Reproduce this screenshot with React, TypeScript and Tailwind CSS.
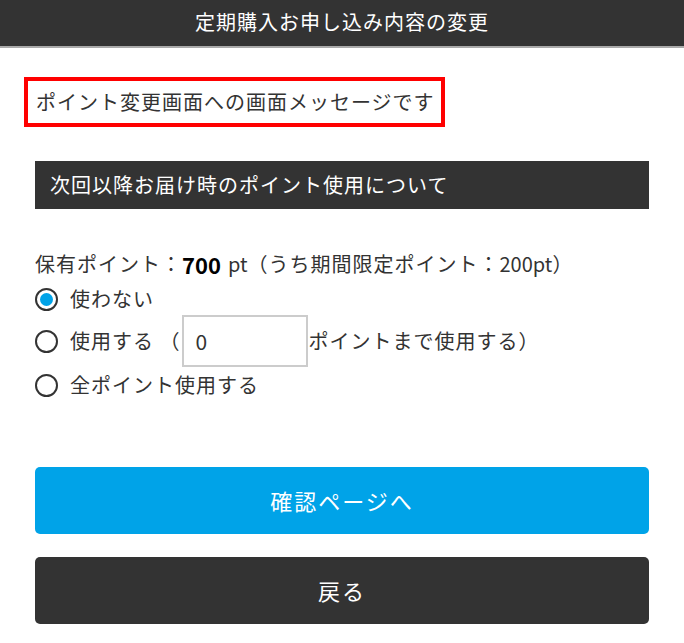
import React, { useState } from "react";

const font = { fontFamily: '"Noto Sans CJK JP", "Noto Sans", sans-serif' };

const Radio = ({ checked, onClick }: { checked: boolean; onClick: () => void }) => (
  <span
    onClick={onClick}
    className="flex h-[23px] w-[23px] shrink-0 items-center justify-center rounded-full border-2 border-[#333] bg-white cursor-pointer"
  >
    {checked && <span className="h-[13px] w-[13px] rounded-full bg-[#00a3e8]" />}
  </span>
);

export default function App() {
  const [mode, setMode] = useState("none");
  const [amount, setAmount] = useState("0");

  return (
    <div className="min-h-screen bg-white text-[#222]" style={font}>
      <div className="flex h-[48px] items-center justify-center border-b-2 border-[#aaa] bg-[#333] pb-[2px] text-[20px] tracking-[1px] text-white">
        定期購入お申し込み内容の変更
      </div>

      <div className="px-[35px] text-[20px] tracking-[1px]">
        <div className="mt-[29px] ml-[-11px] inline-flex h-[50px] items-center border-4 border-[#f00] pl-[8px] pr-[6px] text-[#333]">
          ポイント変更画面への画面メッセージです
        </div>

        <div className="mt-[34px] flex h-[48px] items-center bg-[#333] pl-[15px] text-white">
          次回以降お届け時のポイント使用について
        </div>

        <div className="mt-[40px] flex h-[30px] items-center text-[#333]">
          保有ポイント：<span className="text-[22px] font-bold tracking-normal text-black">700</span>
          <span className="ml-[7px] tracking-normal">pt</span>
          <span>（うち期間限定ポイント：</span>
          <span className="tracking-normal">200pt</span>
          <span>）</span>
        </div>

        <div className="mt-[4px] flex h-[32px] items-center gap-[12px] text-[#333]">
          <Radio checked={mode === "none"} onClick={() => setMode("none")} />
          使わない
        </div>

        <div className="flex h-[52px] items-center gap-[12px] text-[#333]">
          <Radio checked={mode === "some"} onClick={() => setMode("some")} />
          <span>使用する （</span>
          <input
            value={amount}
            onChange={(e) => setAmount(e.target.value)}
            className="ml-[-10px] h-[52px] w-[126px] border-2 border-[#ccc] px-[11px] text-[21px] text-[#333] outline-none"
            style={font}
          />
          <span className="ml-[-12px]">ポイントまで使用する）</span>
        </div>

        <div className="mt-[1px] flex h-[34px] items-center gap-[12px] text-[#333]">
          <Radio checked={mode === "all"} onClick={() => setMode("all")} />
          全ポイント使用する
        </div>

        <button
          className="mt-[65px] flex h-[67px] w-full items-center justify-center rounded-[5px] bg-[#00a3e8] text-[22px] tracking-[2px] text-white"
          style={font}
        >
          確認ページへ
        </button>

        <button
          className="mt-[23px] flex h-[67px] w-full items-center justify-center rounded-[5px] bg-[#333] text-[22px] tracking-[2px] text-white"
          style={font}
        >
          戻る
        </button>
      </div>
    </div>
  );
}
